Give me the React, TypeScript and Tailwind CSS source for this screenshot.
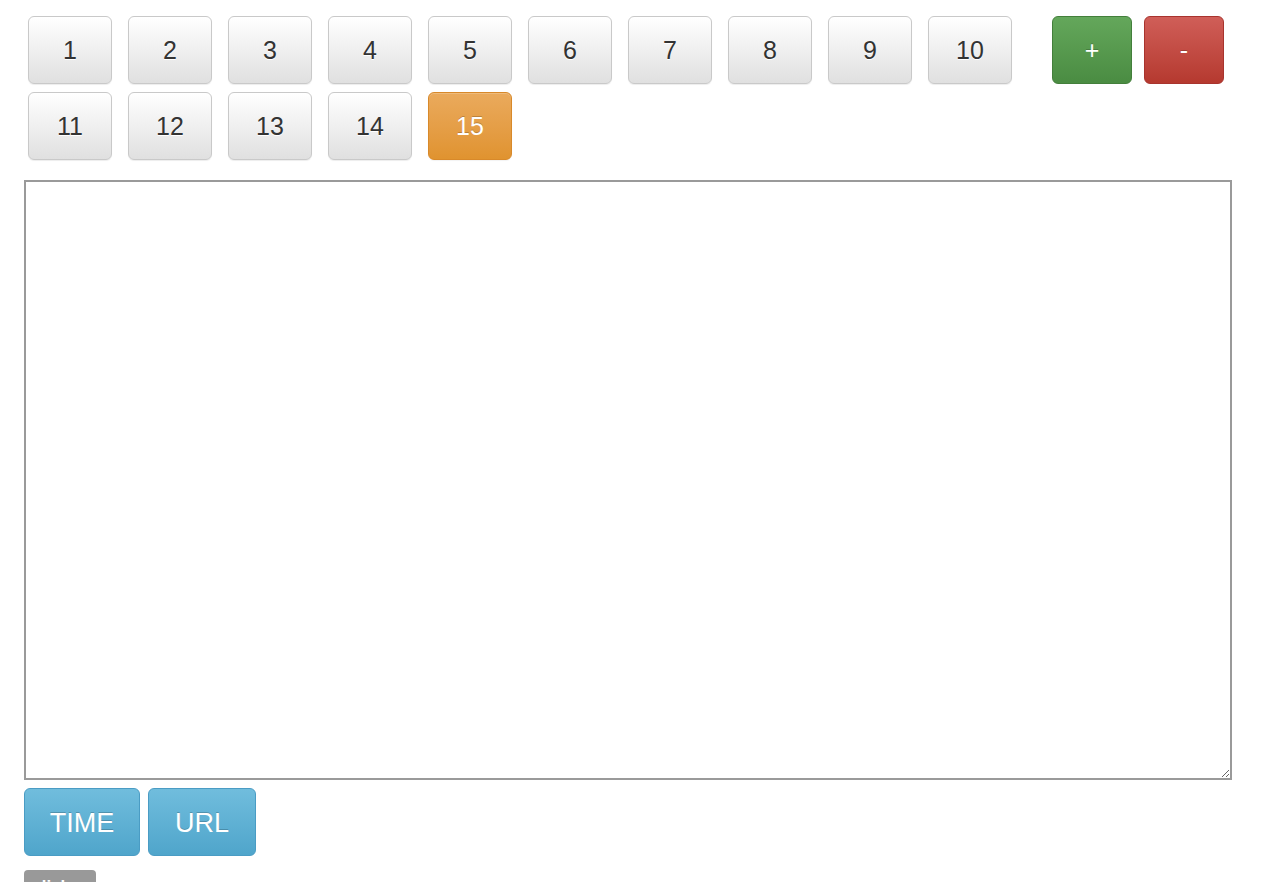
import React from "react";

const numbers = Array.from({ length: 15 }, (_, i) => i + 1);
const active = 15;

const App = () => {
  const renderNumber = (n: number) => {
    if (n === active) {
      return (
        <button
          key={n}
          className="w-[84px] h-[68px] pt-[2px] rounded-[6px] border border-[#d8892a] bg-gradient-to-b from-[#eaaa5c] to-[#e0932f] text-[25px] text-white [text-shadow:0_-1px_0_rgba(0,0,0,0.2)] shadow-[inset_0_1px_0_rgba(255,255,255,0.2),0_1px_1px_rgba(0,0,0,0.05)]"
        >
          {n}
        </button>
      );
    }
    return (
      <button
        key={n}
        className="w-[84px] h-[68px] pt-[2px] rounded-[6px] border border-[#c9c9c9] bg-gradient-to-b from-[#ffffff] to-[#e0e0e0] text-[25px] text-[#333] [text-shadow:0_1px_0_#fff] shadow-[inset_0_1px_0_rgba(255,255,255,0.15),0_1px_1px_rgba(0,0,0,0.075)]"
      >
        {n}
      </button>
    );
  };

  return (
    <div className="min-h-[882px] bg-white pl-6 pr-[30px] pt-4 font-['Liberation_Sans',Arial,sans-serif] overflow-hidden">
      {/* NUMBER PAD + ADD / REMOVE */}
      <div className="flex justify-between items-start">
        <div className="w-[988px] pl-1 flex flex-wrap gap-x-4 gap-y-2">
          {numbers.map((n) => renderNumber(n))}
        </div>
        <div className="flex gap-3 mr-2">
          <button className="w-[80px] h-[68px] pt-[2px] rounded-[6px] border border-[#437f3b] bg-gradient-to-b from-[#64a75b] to-[#4a8c42] text-[25px] text-white [text-shadow:0_-1px_0_rgba(0,0,0,0.2)]">
            +
          </button>
          <button className="w-[80px] h-[68px] pt-[2px] rounded-[6px] border border-[#a8342e] bg-gradient-to-b from-[#d05e58] to-[#b5392f] text-[25px] text-white [text-shadow:0_-1px_0_rgba(0,0,0,0.2)]">
            -
          </button>
        </div>
      </div>

      {/* TEXT AREA */}
      <textarea className="block w-full h-[600px] mt-5 border-2 border-[#9a9a9a] bg-white outline-none p-1 text-sm" />

      {/* ACTIONS */}
      <div className="flex gap-2 mt-2">
        <button className="w-[116px] h-[68px] pt-[2px] rounded-[6px] border border-[#4a9cc4] bg-gradient-to-b from-[#70bddd] to-[#4fa5cb] text-[27px] text-white [text-shadow:0_-1px_0_rgba(0,0,0,0.2)]">
          TIME
        </button>
        <button className="w-[108px] h-[68px] pt-[2px] rounded-[6px] border border-[#4a9cc4] bg-gradient-to-b from-[#70bddd] to-[#4fa5cb] text-[27px] text-white [text-shadow:0_-1px_0_rgba(0,0,0,0.2)]">
          URL
        </button>
      </div>

      <div className="mt-[14px]">
        <span className="inline-block w-[72px] pl-3 pt-[8px] rounded-[4px] bg-[#999999] text-white text-[17px] font-bold leading-none">
          disk
        </span>
      </div>
    </div>
  );
};

export default App;
